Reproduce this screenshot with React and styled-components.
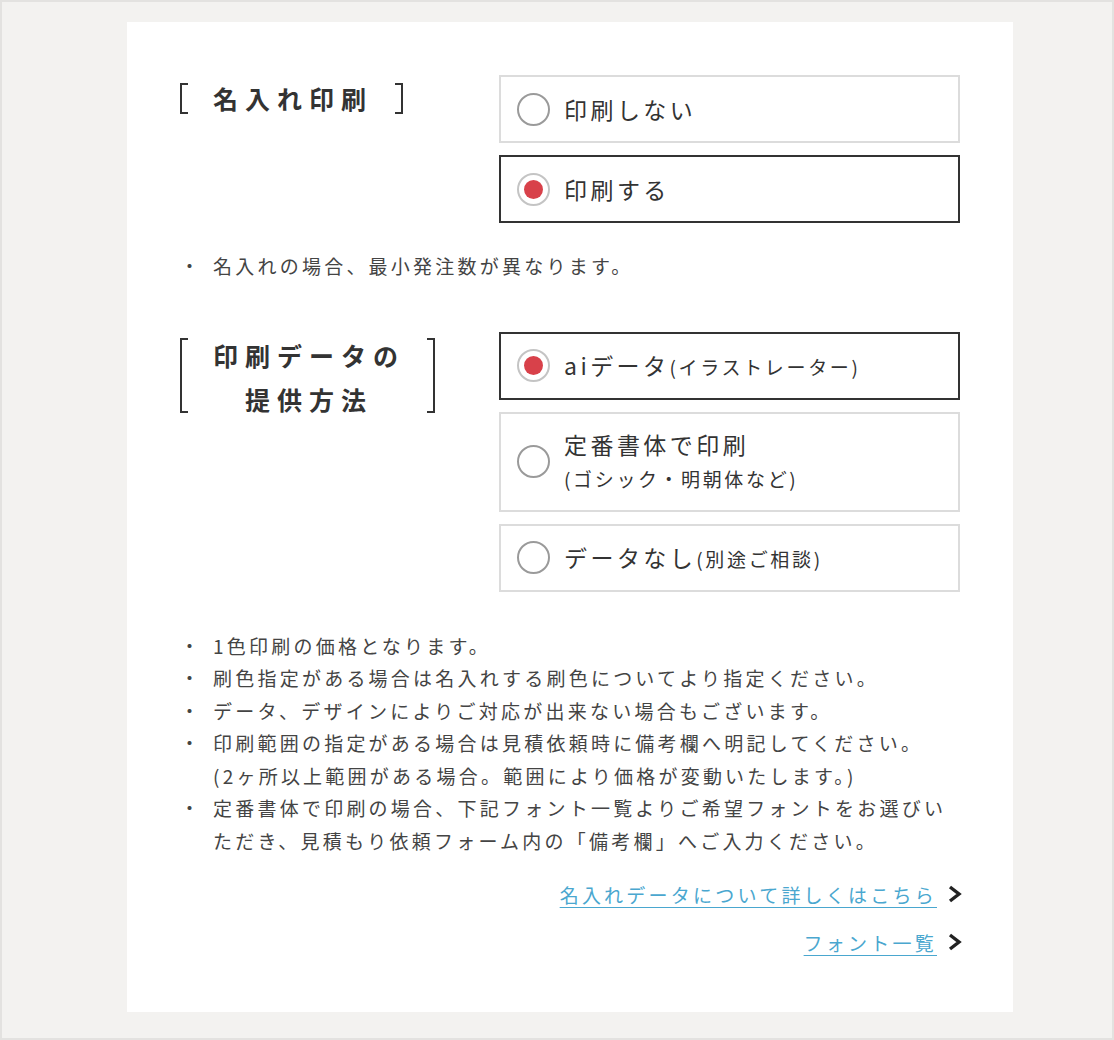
import React from "react";
import styled, { createGlobalStyle } from "styled-components";

const GlobalStyle = createGlobalStyle`
  html, body {
    margin: 0;
    padding: 0;
    background: #f3f2f0;
  }
  body {
    font-family: "Noto Sans CJK JP", "Noto Sans", sans-serif;
    color: #333;
  }
`;

const Page = styled.div`
  box-sizing: border-box;
  width: 1114px;
  height: 1040px;
  border: 2px solid #e3e2e0;
  padding: 20px 99px 0 125px;
`;

const Card = styled.div`
  box-sizing: border-box;
  width: 886px;
  height: 990px;
  background: #fff;
  padding: 53px 53px 0;
`;

const Section = styled.div`
  display: grid;
  grid-template-columns: 1fr 461px;
  margin-top: ${(p) => p.$top || 0}px;
`;

const Label = styled.div`
  display: flex;
  align-self: start;
  margin-top: 1px;
`;

const Bracket = styled.span`
  width: 6px;
  margin: ${(p) => (p.$tall ? "5px 0 8px" : "7px 0 6px")};
  border: 2px solid #333;
  border-${(p) => (p.$side === "left" ? "right" : "left")}: none;
`;

const LabelText = styled.div`
  padding: 0 22px 0 25px;
  font-size: 25px;
  font-weight: 700;
  line-height: 44px;
  letter-spacing: 7px;
  text-align: center;
  color: #333;
`;

const Options = styled.div`
  display: flex;
  flex-direction: column;
  gap: 12px;
`;

const Option = styled.label`
  box-sizing: border-box;
  display: flex;
  align-items: center;
  min-height: ${(p) => p.$h || 68}px;
  padding: 0 16px;
  border: 2px solid ${(p) => (p.$checked ? "#333" : "#dcdcdc")};
  background: #fff;
  cursor: pointer;
`;

const Radio = styled.span`
  box-sizing: border-box;
  flex: none;
  display: flex;
  align-items: center;
  justify-content: center;
  width: 33px;
  height: 33px;
  border-radius: 50%;
  border: 2px solid ${(p) => (p.$checked ? "#c4c4c4" : "#9a9a9a")};
  margin-right: 14px;
  &::after {
    content: "";
    display: ${(p) => (p.$checked ? "block" : "none")};
    width: 19px;
    height: 19px;
    border-radius: 50%;
    background: #d8414a;
  }
`;

const OptionText = styled.div`
  font-size: 23px;
  line-height: 33px;
  letter-spacing: 0.15em;
  color: #333;
`;

const Sub = styled.span`
  font-size: 19px;
  letter-spacing: 0.14em;
`;

const NoteList = styled.ul`
  list-style: none;
  margin: ${(p) => p.$top || 0}px 0 0;
  padding: 0;
`;

const Note = styled.li`
  display: flex;
  font-size: 19px;
  line-height: 32.5px;
  letter-spacing: 0.17em;
  color: #444;
`;

const Dot = styled.span`
  flex: none;
  width: 33px;
  letter-spacing: 0;
`;

const Links = styled.div`
  display: flex;
  flex-direction: column;
  align-items: flex-end;
  gap: 12px;
  margin: 19px -2px 0 0;
`;

const LinkRow = styled.div`
  display: flex;
  align-items: center;
  gap: 12px;
  height: 36px;
`;

const Link = styled.a`
  font-size: 19px;
  letter-spacing: 0.17em;
  margin-right: -3px;
  color: #4aa7cf;
  text-decoration: underline;
  text-underline-offset: 4px;
`;

const Chevron = () => (
  <svg width="16" height="20" viewBox="0 0 16 20">
    <polyline
      points="4,3 13,10 4,17"
      fill="none"
      stroke="#222"
      strokeWidth="3.4"
      strokeLinejoin="miter"
    />
  </svg>
);

const RadioOption = ({ checked, h, children }) => (
  <Option $checked={checked} $h={h}>
    <Radio $checked={checked} />
    <OptionText>{children}</OptionText>
  </Option>
);

const Heading = ({ tall, children }) => (
  <Label>
    <Bracket $side="left" $tall={tall} />
    <LabelText>{children}</LabelText>
    <Bracket $side="right" $tall={tall} />
  </Label>
);

const notes = [
  ["1色印刷の価格となります。"],
  ["刷色指定がある場合は名入れする刷色についてより指定ください。"],
  ["データ、デザインによりご対応が出来ない場合もございます。"],
  [
    "印刷範囲の指定がある場合は見積依頼時に備考欄へ明記してください。",
    "(2ヶ所以上範囲がある場合。範囲により価格が変動いたします。)",
  ],
  [
    "定番書体で印刷の場合、下記フォント一覧よりご希望フォントをお選びい",
    "ただき、見積もり依頼フォーム内の「備考欄」へご入力ください。",
  ],
];

export default function App() {
  return (
    <>
      <GlobalStyle />
      <Page>
        <Card>
          <Section>
            <Heading>名入れ印刷</Heading>
            <Options>
              <RadioOption>印刷しない</RadioOption>
              <RadioOption checked>印刷する</RadioOption>
            </Options>
          </Section>

          <NoteList $top={27}>
            <Note>
              <Dot>・</Dot>
              <span>名入れの場合、最小発注数が異なります。</span>
            </Note>
          </NoteList>

          <Section $top={49}>
            <Heading tall>
              印刷データの
              <br />
              提供方法
            </Heading>
            <Options>
              <RadioOption checked>
                aiデータ<Sub>(イラストレーター)</Sub>
              </RadioOption>
              <RadioOption h={100}>
                定番書体で印刷
                <br />
                <Sub>(ゴシック・明朝体など)</Sub>
              </RadioOption>
              <RadioOption>
                データなし<Sub>(別途ご相談)</Sub>
              </RadioOption>
            </Options>
          </Section>

          <NoteList $top={38}>
            {notes.map((lines, i) => (
              <Note key={i}>
                <Dot>・</Dot>
                <div>
                  {lines.map((l, j) => (
                    <div key={j}>{l}</div>
                  ))}
                </div>
              </Note>
            ))}
          </NoteList>

          <Links>
            <LinkRow>
              <Link href="#">名入れデータについて詳しくはこちら</Link>
              <Chevron />
            </LinkRow>
            <LinkRow>
              <Link href="#">フォント一覧</Link>
              <Chevron />
            </LinkRow>
          </Links>
        </Card>
      </Page>
    </>
  );
}
